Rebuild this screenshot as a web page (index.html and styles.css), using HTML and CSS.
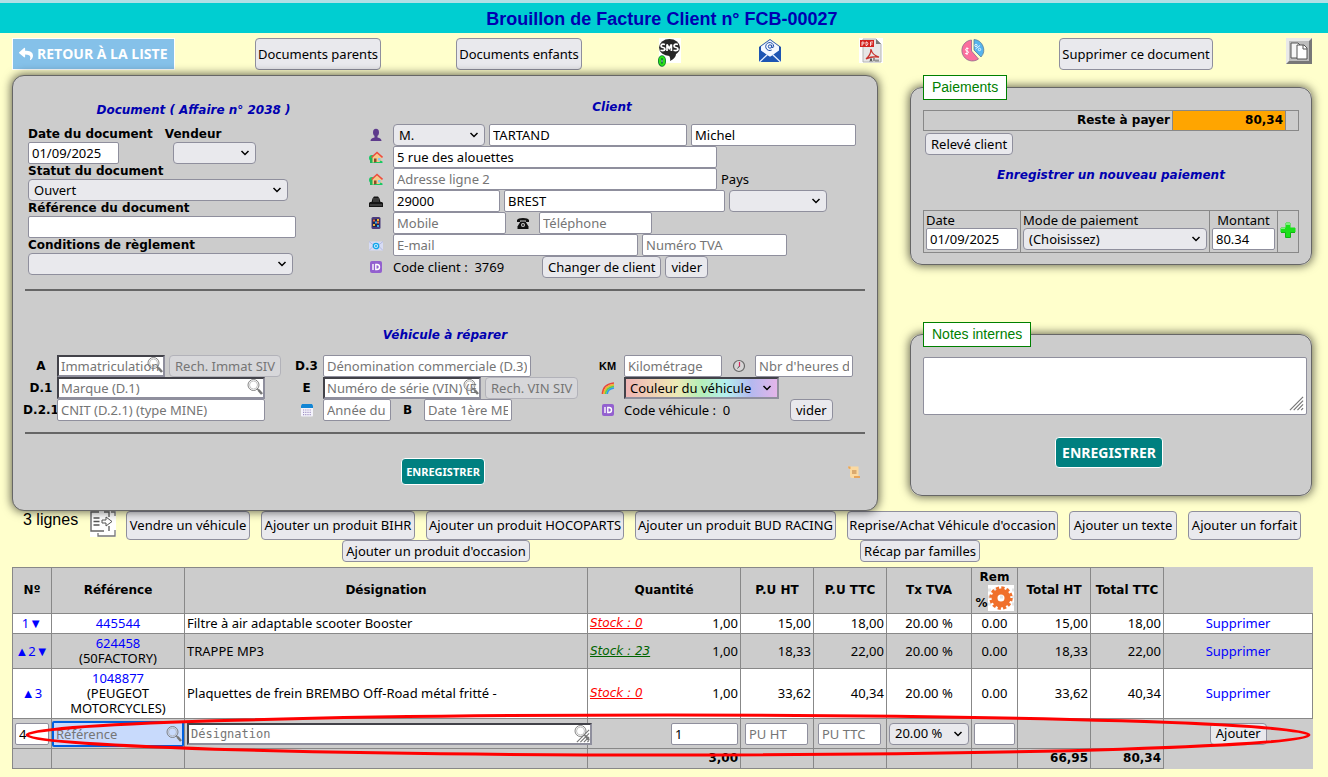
FILE: index.html
```html
<!DOCTYPE html>
<html lang="fr">
<head>
<meta charset="utf-8">
<title>Brouillon de Facture Client n° FCB-00027</title>
<link rel="stylesheet" href="styles.css">
</head>
<body>
<svg class="defs" aria-hidden="true">
  <symbol id="i-house" viewBox="0 0 14 14">
    <circle cx="3" cy="8" r="3" fill="#17c964"/><rect x="1" y="8" width="3" height="5" fill="#21b35a"/>
    <path d="M3.500 7 8 3l4.500 4v6h-9z" fill="#f6c98a"/>
    <path d="M2.500 7.500 8 2.500l5.500 5" fill="none" stroke="#ef4b3c" stroke-width="1.600"/>
    <rect x="5" y="8.500" width="2.500" height="4.500" fill="#8b4a2b"/><rect x="9" y="8" width="2.500" height="2.500" fill="#7fc8f5"/>
    <path d="M1 13h12.500v-1.500l-2-1-1 1.500H7.500z" fill="#17c964"/>
  </symbol>
  <symbol id="i-id" viewBox="0 0 14 14">
    <rect x="1" y="1" width="12" height="12" rx="2" fill="#9360cf"/>
    <path d="M4 4v6M6.800 4.500v5h1.200q2.500 0 2.500-2.500T8 4.500z" fill="none" stroke="#fff" stroke-width="1.400"/>
  </symbol>
  <symbol id="i-search" viewBox="0 0 18 18">
    <path d="M11 10.500 13 12.500" stroke="#777" stroke-width="1.500"/><path d="M12.500 12 16 16" stroke="#777" stroke-width="2.600"/>
    <circle cx="7.500" cy="7" r="5.500" fill="none" stroke="#777" stroke-width=".9"/>
    <circle cx="7.500" cy="7" r="4" fill="none" stroke="#aaa" stroke-width=".7"/>
  </symbol>
</svg>

<header class="title-bar"><h1>Brouillon de Facture Client n° FCB-00027</h1></header>

<div class="page">
  <nav class="toolbar">
    <a class="back" href="#liste">
      <svg class="ic14" viewBox="0 0 512 512"><path fill="#fff" d="M8.300 189.400 184.300 37.400c15.400-13.300 39.700-2.500 39.700 18.200v80C384.600 137.500 512 169.700 512 322.300c0 61.600-39.700 122.600-83.500 154.500-13.700 10-33.200-2.500-28.200-18.700C445.800 312.800 378.800 274.200 224 272v88c0 20.700-24.300 31.500-39.700 18.200l-176-152c-11.100-9.600-11.100-27.200 0-36.800z"/></svg>
      RETOUR À LA LISTE</a>
    <div><button class="btn tall">Documents parents</button></div>
    <div><button class="btn tall">Documents enfants</button></div>
    <div><a href="#sms" aria-label="SMS"><svg class="ic28" viewBox="0 0 28 29">
      <rect x="3" y="0" width="22" height="25" fill="#fff"/>
      <ellipse cx="13.500" cy="9.500" rx="10.500" ry="8.500" fill="#262626"/><path d="M12 16h8q0 4-6 7 1-3-2-7z" fill="#262626"/>
      <g fill="none" stroke="#fff" stroke-width="1.700"><path d="M9 6.500Q5 5.500 5 8q0 1.200 2 1.500t2 1.700Q8.500 13.200 4.500 12.200M11 13V6.500l2.200 4 2.200-4V13M22 6.500q-4-1-4 1.500 0 1.200 2 1.500t2 1.700q-.5 2-4.500 1"/></g>
      <ellipse cx="6" cy="23" rx="2.200" ry="4" fill="none" stroke="#063" stroke-width="3.600"/><ellipse cx="6" cy="23" rx="2.200" ry="4" fill="none" stroke="#2be01a" stroke-width="2.200"/>
    </svg></a></div>
    <div><a href="#mail" aria-label="E-mail"><svg class="ic28" viewBox="0 0 28 29">
      <path d="M3 9 14 1l11 8v15H3z" fill="#1f4fa8"/><path d="M5 8.500 14 2l9 6.500v5L14 19 5 13.500z" fill="#f4f8ff"/>
      <path d="M3 24V11l11 8 11-8v13z" fill="#1d55b3"/><path d="M3.500 24l8-7.500M24.500 24l-8-7.500" stroke="#e8f0ff" stroke-width="1.300"/>
      <g fill="none" stroke="#1f4fa8"><circle cx="14" cy="8.500" r="1.700"/><path d="M15.700 6.800v2.500q1.800 1 2-1a4 4 0 1 0-2 3.700"/></g>
    </svg></a></div>
    <div><a href="#pdf" aria-label="PDF"><svg class="ic28" viewBox="0 0 28 29">
      <rect x="2" y="0" width="24" height="25" fill="#fff"/><path d="M6 1h13l5 5v18H6z" fill="#e6e6e6" stroke="#b5b5b5"/><path d="M19 1v5h5z" fill="#777"/>
      <rect x="3" y="2" width="14" height="7" fill="#d3231f"/>
      <path d="M5 8V4h1.500q1.500 1 0 2H5M9 4v3.500h1q2-1.700 0-3.500zM13.500 8V4h2.500M13.500 6h2" fill="none" stroke="#fff" stroke-width=".8"/>
      <path d="M9 21q5-4 5-10 1 6 8 8-7-1-13 2z" fill="none" stroke="#c8322d" stroke-width="1.300"/>
      <path d="M13 23.500l1-3 1 3M17 20v3M19 23.500v-2M21 23.500v-2" stroke="#444" fill="none"/>
    </svg></a></div>
    <div><a href="#marge" aria-label="Marge"><svg class="ic28" viewBox="0 0 28 29">
      <path d="M13.500 13V2A10.500 10.500 0 1 0 20.500 21z" fill="#fb6f9d" stroke="#8d6a8d" stroke-width=".8"/>
      <path d="M16 12V1.500A10.500 10.500 0 0 1 23 19z" fill="#55b4ee" stroke="#5b7f9b" stroke-width=".8"/>
      <path d="M10.500 10.500Q7.500 10 7.500 11.500q0 1.200 1.500 1.500t1.500 1.500Q10.200 16 7.200 15.500M9 9.300v7.700" fill="none" stroke="#fff"/>
      <path d="M17.500 11l4.500-3.500" stroke="#e4f4ff"/><circle cx="18" cy="7.500" r="1.200" fill="none" stroke="#e4f4ff"/><circle cx="21.500" cy="11.500" r="1.200" fill="none" stroke="#e4f4ff"/>
    </svg></a></div>
    <div><button class="btn tall">Supprimer ce document</button></div>
    <div class="end"><a href="#copie" aria-label="Copier"><svg class="ic26" viewBox="0 0 26 26">
      <rect width="26" height="26" fill="#777"/><path d="M0 0h26l-3 3H3v20l-3 3z" fill="#e9e9e9"/><rect x="3" y="3" width="20" height="20" fill="#bdbdbd"/>
      <path d="M5 5h7l3 3v12H5z" fill="#f6f6f6" stroke="#555"/><path d="M11 7h7l3 3v11H11z" fill="#fff" stroke="#555"/><path d="M17 7v4h4" fill="none" stroke="#555"/>
    </svg></a></div>
  </nav>

  <main class="columns">
    <form class="card doc-card">
      <div class="doc-top">
        <section class="doc">
          <h2>Document ( Affaire n° 2038 )</h2>
          <div class="pair">
            <div class="stack"><label for="date">Date du document</label><input id="date" class="w91" value="01/09/2025"></div>
            <div class="stack"><label for="vendeur">Vendeur</label><select id="vendeur" class="w83 shift"><option></option></select></div>
          </div>
          <label for="statut">Statut du document</label>
          <select id="statut" class="w260"><option>Ouvert</option></select>
          <label for="refdoc">Référence du document</label>
          <input id="refdoc" class="w268">
          <label for="cond">Conditions de règlement</label>
          <select id="cond" class="w265"><option></option></select>
        </section>

        <section class="client">
          <h2>Client</h2>
          <div class="line"><svg class="ic14" viewBox="0 0 14 14"><ellipse cx="7" cy="4.500" rx="3" ry="3.700" fill="#5d3a8c"/><path d="M1.500 13q0-3 4-3.500V8h3v1.500q4 .5 4 3.500z" fill="#5d3a8c"/></svg>
            <select class="w92" aria-label="Civilité"><option>M.</option></select><input class="w198" aria-label="Nom" value="TARTAND"><input class="w165" aria-label="Prénom" value="Michel"></div>
          <div class="line"><svg class="ic14"><use href="#i-house"/></svg><input class="w324" aria-label="Adresse" value="5 rue des alouettes"></div>
          <div class="line"><svg class="ic14"><use href="#i-house"/></svg><input class="w324" aria-label="Adresse ligne 2" placeholder="Adresse ligne 2"><label class="plain" for="pays">Pays</label></div>
          <div class="line"><svg class="ic14" viewBox="0 0 14 14"><path d="M0 13V9l1-1h1.500l1-3.500L5 2.500h4l1.500 2 1 3.500H13l1 1v4z" fill="#151515"/><path d="M5 4v4M7 4v4M9 4v4M1 11h12" stroke="#777" stroke-width=".8"/></svg>
            <input class="w107" aria-label="Code postal" value="29000"><input class="w221" aria-label="Ville" value="BREST"><select id="pays" class="w98"><option></option></select></div>
          <div class="line"><svg class="ic14" viewBox="0 0 14 14"><rect x="2.500" y="1" width="9" height="12" rx="1.500" fill="#4a3b7c"/><rect x="3.500" y="3" width="7" height="8" fill="#20264f"/><path d="M4 3.500h2v2H4zM8 5.500h2v2H8z" fill="#e8623a"/><path d="M6 5.500h2v2H6zM8 9h2v2H8z" fill="#3fa9e8"/><path d="M4 8h2v2H4zM8 3h2v2H8z" fill="#f2b532"/></svg>
            <input class="w113" aria-label="Mobile" placeholder="Mobile"><span class="mid"><svg class="ic14" viewBox="0 0 14 14"><path d="M1 6V4q1-2 6-2t6 2v2h-3V4.500H4V6z" fill="#111"/><path d="M4.500 5.500h5l3 5V13h-11v-2.500z" fill="#111"/><circle cx="7" cy="9" r="2" fill="#ccc"/><circle cx="7" cy="9" r=".9" fill="#111"/></svg></span><input class="w113" aria-label="Téléphone" placeholder="Téléphone"></div>
          <div class="line"><svg class="ic14" viewBox="0 0 14 14"><rect y="3.500" width="14" height="9" fill="#d7dcf5"/><path d="M0 3.500 7 9l7-5.500M0 12.500l5-5M14 12.500l-5-5" fill="none" stroke="#a9b0d9" stroke-width=".8"/><circle cx="7" cy="8" r="2.700" fill="#c9ecff" stroke="#12a4ea" stroke-width="1.300"/><circle cx="7" cy="8" r="1" fill="#12a4ea"/></svg>
            <input class="w245" aria-label="E-mail" placeholder="E-mail"><input class="w145" aria-label="Numéro TVA" placeholder="Numéro TVA"></div>
          <div class="line"><svg class="ic14"><use href="#i-id"/></svg><span class="w145">Code client :&nbsp; 3769</span><button type="button" class="btn">Changer de client</button><button type="button" class="btn">vider</button></div>
        </section>
      </div>

      <hr>
      <h2 class="veh-title">Véhicule à réparer</h2>
      <div class="veh">
        <label for="immat">A</label>
        <div class="fields"><span class="search w108"><input id="immat" class="inset" placeholder="Immatriculation (A)"><svg class="ic18"><use href="#i-search"/></svg></span><button type="button" class="btn" disabled>Rech. Immat SIV</button></div>
        <label for="deno">D.3</label>
        <div class="fields"><input id="deno" class="w208" placeholder="Dénomination commerciale (D.3)"></div>
        <label for="km" class="km">KM</label>
        <div class="fields"><input id="km" class="w98" placeholder="Kilométrage"><span class="mid"><svg class="ic14" viewBox="0 0 14 14"><circle cx="7" cy="7" r="5.500" fill="#d6d6d6" stroke="#666" stroke-width="1.200"/><path d="M7.500 3v4.500" stroke="#e0245e" stroke-width="1.200"/><path d="M7.500 7 5.500 9.500" stroke="#555"/></svg></span><input class="w98" aria-label="Nombre d'heures" placeholder="Nbr d'heures de"></div>

        <label for="marque">D.1</label>
        <div class="fields"><span class="search w208"><input id="marque" class="inset" placeholder="Marque (D.1)"><svg class="ic18"><use href="#i-search"/></svg></span></div>
        <label for="vin">E</label>
        <div class="fields"><span class="search w158"><input id="vin" class="inset" placeholder="Numéro de série (VIN) (E)"><svg class="ic18"><use href="#i-search"/></svg></span><button type="button" class="btn" disabled>Rech. VIN SIV</button></div>
        <label for="couleur"><svg class="ic14" viewBox="0 0 14 14"><g fill="none" stroke-width="1.700"><path d="M1.500 13Q2 3 13 2" stroke="#e8453c"/><path d="M3 13Q3.500 5 13 3.700" stroke="#f7b32b"/><path d="M4.600 13Q5 6.500 13 5.300" stroke="#5fcf4a"/><path d="M6.200 13Q6.500 8 13 7" stroke="#2f9bee"/></g></svg></label>
        <div class="fields"><select id="couleur" class="w155 rainbow"><option>Couleur du véhicule</option></select></div>

        <label for="cnit">D.2.1</label>
        <div class="fields"><input id="cnit" class="w208" placeholder="CNIT (D.2.1) (type MINE)"></div>
        <label for="annee"><svg class="ic14" viewBox="0 0 14 14"><rect x="1" y="1.500" width="12" height="12" rx="1" fill="#f4f3fb"/><path d="M1 5V2.500l1-1.500h10l1 1.500V5z" fill="#1285d4"/><path d="M3 7h8M3 9.300h8M3 11.600h8" stroke="#a193c4" stroke-dasharray="1.200 1" stroke-width="1.200"/></svg></label>
        <div class="fields"><input id="annee" class="w68" placeholder="Année du modèle"><label class="mid" for="mec">B</label><input id="mec" class="w88" placeholder="Date 1ère MEC"></div>
        <span class="lab"><svg class="ic14"><use href="#i-id"/></svg></span>
        <div class="fields"><span class="w162">Code véhicule :&nbsp; 0</span><button type="button" class="btn">vider</button></div>
      </div>
      <hr>
      <div class="save-row">
        <button type="button" class="save small">ENREGISTRER</button>
        <svg class="ic14" viewBox="0 0 14 14"><path d="M1 1.500h10.500V11H13v2H5q-2 0-2-2V4Q1 4 1 1.500z" fill="#fbd9a0"/><path d="M1 1.500h2.500V4H3Q1 4 1 1.500zM7 11h6v2H7z" fill="#e8a55a"/><path d="M5 6h4.500M5 8h4.500" stroke="#b97a3c"/></svg>
      </div>
    </form>

    <aside class="side">
      <fieldset class="card pay">
        <legend>Paiements</legend>
        <table class="due"><tr><th scope="row">Reste à payer</th><td class="amount">80,34</td><td class="slim"></td></tr></table>
        <button type="button" class="btn releve">Relevé client</button>
        <h2>Enregistrer un nouveau paiement</h2>
        <table class="newpay"><tr>
          <td class="c1"><label class="plain" for="pdate">Date</label><input id="pdate" value="01/09/2025"></td>
          <td><label class="plain" for="pmode">Mode de paiement</label><select id="pmode"><option>(Choisissez)</option></select></td>
          <td class="c3"><label class="plain" for="pmt">Montant</label><input id="pmt" value="80.34"></td>
          <td class="c4"><button type="button" class="ghost" aria-label="Ajouter le paiement"><svg class="ic18" viewBox="0 0 18 18"><path d="M7 2h4v5h5v4h-5v5H7v-5H2V7h5z" fill="#1be01b" stroke="#1be01b"/><path d="M7 2h4v2H7zM2 7h4v1H2z" fill="#7df07d"/><path d="M2 11.500h4.500v5h5v-5H16" fill="none" stroke="#10b510"/></svg></button></td>
        </tr></table>
      </fieldset>
      <fieldset class="card notes">
        <legend>Notes internes</legend>
        <textarea aria-label="Notes internes"></textarea>
        <svg class="grip" viewBox="0 0 16 16"><path d="M1 15 15 1M5 15 15 5M9 15l6-6M13 15l2-2" stroke="#777" stroke-width="1.300"/></svg>
        <div class="center"><button type="button" class="save">ENREGISTRER</button></div>
      </fieldset>
    </aside>
  </main>

  <div class="actions">
    <span class="count">3 lignes</span>
    <svg class="ic26" viewBox="0 0 26 26"><rect width="26" height="26" fill="#fff"/><path d="M9 1H1v19h13M14 1h5v5M19 15v5" fill="none" stroke="#666" stroke-width="1.400"/><path d="M21 1h4v4M25 19v6H8v-3" fill="none" stroke="#777" stroke-width="1.300"/><path d="M3.500 7h6M3.500 10.500h6M3.500 14h6" stroke="#555" stroke-width="1.300"/><path d="M12 9h4V6l6 4.500-6 4.500v-3h-4z" fill="#fff" stroke="#555"/></svg>
    <button class="btn">Vendre un véhicule</button>
    <button class="btn">Ajouter un produit BIHR</button>
    <button class="btn">Ajouter un produit HOCOPARTS</button>
    <button class="btn">Ajouter un produit BUD RACING</button>
    <button class="btn">Reprise/Achat Véhicule d'occasion</button>
    <button class="btn">Ajouter un texte</button>
    <button class="btn">Ajouter un forfait</button>
  </div>
  <div class="actions2">
    <button class="btn">Ajouter un produit d'occasion</button>
    <button class="btn">Récap par familles</button>
  </div>

  <div class="lines-wrap">
    <table class="lines">
      <colgroup><col class="k39"><col class="k133"><col class="k403"><col class="k153"><col class="k73"><col class="k73"><col class="k85"><col class="k46"><col class="k73"><col class="k73"><col class="k149"></colgroup>
      <thead><tr><th>Nº</th><th>Référence</th><th>Désignation</th><th>Quantité</th><th>P.U HT</th><th>P.U TTC</th><th>Tx TVA</th>
        <th class="rem">Rem<div class="gear">%<svg class="ic26" viewBox="0 0 26 26"><rect width="26" height="26" fill="#fff"/><path d="M0 5h26M0 12h26M0 19h26" stroke="#e6e6e6" stroke-width="3" stroke-dasharray="3 3"/><circle cx="13" cy="13" r="6.500" fill="none" stroke="#f0702b" stroke-width="6"/><circle cx="13" cy="13" r="10" fill="none" stroke="#f0702b" stroke-width="3.500" stroke-dasharray="3.100 2.136"/></svg></div></th>
        <th>Total HT</th><th>Total TTC</th><th class="bare"></th></tr></thead>
      <tbody>
        <tr class="white"><td class="c"><a href="#d1">1▼</a></td><td class="c"><a href="#r1">445544</a></td><td>Filtre à air adaptable scooter Booster</td>
          <td><div class="qty"><a class="out" href="#s1">Stock : 0</a><span>1,00</span></div></td><td class="r">15,00</td><td class="r">18,00</td><td class="c">20.00 %</td><td class="c">0.00</td><td class="r">15,00</td><td class="r">18,00</td><td class="c"><a href="#x1">Supprimer</a></td></tr>
        <tr><td class="c"><a href="#d2">▲2▼</a></td><td class="c"><a class="ref" href="#r2">624458</a><div>(50FACTORY)</div></td><td>TRAPPE MP3</td>
          <td><div class="qty"><a class="in" href="#s2">Stock : 23</a><span>1,00</span></div></td><td class="r">18,33</td><td class="r">22,00</td><td class="c">20.00 %</td><td class="c">0.00</td><td class="r">18,33</td><td class="r">22,00</td><td class="c"><a href="#x2">Supprimer</a></td></tr>
        <tr class="white"><td class="c"><a href="#d3">▲3</a></td><td class="c"><a class="ref" href="#r3">1048877</a><div>(PEUGEOT MOTORCYCLES)</div></td><td>Plaquettes de frein BREMBO Off-Road métal fritté -</td>
          <td><div class="qty"><a class="out" href="#s3">Stock : 0</a><span>1,00</span></div></td><td class="r">33,62</td><td class="r">40,34</td><td class="c">20.00 %</td><td class="c">0.00</td><td class="r">33,62</td><td class="r">40,34</td><td class="c"><a href="#x3">Supprimer</a></td></tr>
        <tr class="entry"><td><input aria-label="Numéro" value="4"></td>
          <td class="flush"><span class="search"><input class="inset current" aria-label="Référence" placeholder="Référence"><svg class="ic18"><use href="#i-search"/></svg></span></td>
          <td><span class="search wide"><input class="inset mono" aria-label="Désignation" placeholder="Désignation"><svg class="ic18"><use href="#i-search"/></svg><svg class="corner" viewBox="0 0 16 16"><path d="M1 15 15 1M5 15 15 5M9 15l6-6M13 15l2-2" stroke="#777" stroke-width="1.300"/></svg></span></td>
          <td class="r"><input class="w67" aria-label="Quantité" value="1"></td><td class="c"><input class="w63" aria-label="PU HT" placeholder="PU HT"></td><td class="c"><input class="w63" aria-label="PU TTC" placeholder="PU TTC"></td>
          <td><select aria-label="Taux TVA"><option>20.00 %</option></select></td><td><input aria-label="Remise"></td><td></td><td></td><td class="c bare"><button class="btn add">Ajouter</button></td></tr>
      </tbody>
      <tfoot><tr><td></td><td></td><td></td><td class="r">3,00</td><td></td><td></td><td></td><td></td><td class="r">66,95</td><td class="r">80,34</td><td class="bare"></td></tr></tfoot>
    </table>
    <svg class="mark" viewBox="0 0 1300 48" preserveAspectRatio="none"><ellipse cx="656" cy="24" rx="641" ry="20" fill="none" stroke="#f00" stroke-width="3"/></svg>
  </div>
</div>
</body>
</html>
```
FILE: styles.css
```css
* { box-sizing: border-box; }

body {
  margin: 0;
  background: #ffffcc;
  color: #000;
  font: 13px/15px "Noto Sans", sans-serif;
}

.defs { display: none; }
svg { display: block; flex: none; }
.ic14 { width: 14px; height: 14px; }
.ic18 { width: 18px; height: 18px; }
.ic26 { width: 26px; height: 26px; }
.ic28 { width: 28px; height: 29px; }

.title-bar {
  border-top: 3px solid #b0e0e6;
  background: #00ced1;
  padding: 6px 0 4px;
  text-align: center;
}
h1 {
  margin: 0;
  padding-right: 4px;
  font: bold 18px/20px "Liberation Sans", sans-serif;
  color: #0000b0;
}
h2 {
  margin: 0;
  font: italic bold 12px/16px "DejaVu Sans", sans-serif;
  color: #0000b0;
  text-align: center;
}

.page { padding: 0 16px 8px 12px; }

/* form controls */
input, select, textarea, button { font: inherit; color: #000; margin: 0; }
input, select {
  height: 22px;
  min-width: 0;
  border: 1px solid #8f8f9d;
  border-radius: 2px;
  padding: 0 3px;
  background-color: #fff;
}
input::placeholder { color: #757575; opacity: 1; }
select {
  appearance: none;
  border-radius: 4px;
  padding: 0 20px 0 5px;
  background: #e9e9ed url("data:image/svg+xml,%3Csvg xmlns='http://www.w3.org/2000/svg' width='10' height='8'%3E%3Cpath d='M1.500 2 5 5.500 8.500 2' fill='none' stroke='%23000' stroke-width='1.500'/%3E%3C/svg%3E") no-repeat right 5px center;
}
input.inset { border: 2px inset #8f8f9d; border-radius: 0; padding: 0 2px; }
.btn {
  min-height: 22px;
  border: 1px solid #8f8f9d;
  border-radius: 4px;
  padding: 0 5px;
  background: #e9e9ed;
  white-space: nowrap;
}
.btn.tall { height: 32px; padding: 0 2px; }
.btn:disabled { background: #d7d7da; border-color: #b2b2b9; color: #757575; }
.save {
  height: 31px;
  border: 1px solid #fff;
  border-radius: 4px;
  padding: 0 6px;
  background: #008080;
  color: #fff;
  font-size: 14px;
  font-weight: bold;
}
.save.small { height: 27px; padding: 0 4px; font-size: 11px; }
.ghost { border: 0; padding: 0; background: none; }

.w63 { width: 63px; } .w67 { width: 67px; } .w68 { width: 68px; } .w83 { width: 83px; }
.w88 { width: 88px; } .w91 { width: 91px; } .w92 { width: 92px; } .w98 { width: 98px; }
.w107 { width: 107px; } .w108 { width: 108px; } .w113 { width: 113px; } .w145 { width: 145px; }
.w155 { width: 155px; } .w158 { width: 158px; } .w162 { width: 162px; } .w165 { width: 165px; }
.w198 { width: 198px; } .w208 { width: 208px; } .w221 { width: 221px; } .w245 { width: 245px; }
.w260 { width: 260px; } .w265 { width: 265px; } .w268 { width: 268px; } .w324 { width: 324px; }

/* toolbar */
.toolbar {
  display: grid;
  grid-template-columns: 206fr 200fr 202fr 99fr 102fr 100fr 102fr 226fr 63fr;
  align-items: start;
  justify-items: center;
  padding: 5px 0;
}
.toolbar > .end { justify-self: end; }
.back {
  justify-self: start;
  display: flex;
  align-items: center;
  gap: 4px;
  height: 32px;
  border: 1px solid #fff;
  padding: 0 6px;
  background: #85c1e9;
  color: #fff;
  font: bold 14px/16px "Noto Sans", sans-serif;
  font-family: "Open Sans", "Noto Sans", sans-serif;
  text-decoration: none;
}

/* cards */
.columns {
  position: relative;
  display: grid;
  grid-template-columns: minmax(0, 866fr) minmax(0, 402fr);
  gap: 32px;
}
.card {
  border: 1px solid #666;
  border-radius: 12px;
  background: #ccc;
  box-shadow: 0 0 10px 1px rgba(0, 0, 0, .6);
  margin: 0;
  min-width: 0;
}
.doc-card { padding: 23px 12px 25px; }
.doc-top { display: grid; grid-template-columns: 334fr 506fr; }
.doc { display: flex; flex-direction: column; align-items: flex-start; padding: 3px 0 0 3px; }
.doc h2 { align-self: stretch; margin-bottom: 9px; }
label { font: bold 12px/15px "DejaVu Sans", sans-serif; }
label.plain { font: inherit; }
.pair { display: flex; gap: 12px; }
.stack { display: flex; flex-direction: column; }
.shift { margin-left: 8px; }
.client h2 { margin-bottom: 9px; }
.line, .fields { display: flex; align-items: center; gap: 4px; height: 22px; white-space: nowrap; }
.line { padding-left: 10px; }
.line > svg:first-child { margin-right: 6px; }
.mid { width: 25px; display: flex; justify-content: center; }
hr { margin: 11px 0; border: 0; border-top: 2px solid #666; }
.doc-card > hr { height: 2px; }
.veh-title { margin: 36px 0 12px; }
.veh {
  display: grid;
  grid-template-columns: 32px 233fr 33px 268fr 33px 241fr;
  align-items: center;
}
.veh > label, .lab { display: flex; justify-content: center; }
.km { font: bold 11px/15px "Liberation Sans", sans-serif; }
.search { position: relative; display: flex; }
.search input { width: 100%; }
.search svg { position: absolute; right: 1px; top: 1px; pointer-events: none; }
.rainbow {
  border: 2px inset #8f8f9d;
  border-radius: 0;
  padding-left: 4px;
  background-image: url("data:image/svg+xml,%3Csvg xmlns='http://www.w3.org/2000/svg' width='10' height='8'%3E%3Cpath d='M1.500 2 5 5.500 8.500 2' fill='none' stroke='%23000' stroke-width='1.500'/%3E%3C/svg%3E"), linear-gradient(90deg, #efb5b5, #efe9b5 33%, #b5efb9 50%, #b5efef 66%, #b5b9ef 83%, #e4b5ea);
  background-position: right 5px center, 0 0;
}
.save-row { display: grid; grid-template-columns: 1fr auto; align-items: center; padding: 13px 4px 0 14px; }
.save-row .save { justify-self: center; }

/* side panels */
.side { display: flex; flex-direction: column; gap: 57px; }
legend {
  border: 1px solid #008000;
  background: #fff;
  color: #008000;
  padding: 3px 8px;
  font: 14px/17px "Liberation Sans", sans-serif;
}
.pay { padding: 10px 12px 11px; }
table { border-collapse: collapse; width: 100%; }
.side td, .side th { border: 1px solid #888; }
.side th, .side .amount { font: bold 12px/15px "DejaVu Sans", sans-serif; text-align: right; padding: 2px; }
.side .amount { width: 113px; background: #ffa500; }
.slim { width: 13px; }
.releve { margin: 2px; }
.pay h2 { margin: 10px 0 27px; }
.newpay { table-layout: fixed; }
.newpay td { padding: 2px; }
.newpay label { display: block; }
.newpay input, .newpay select { width: 100%; display: block; }
.c1 { width: 97px; }
.c3 { width: 68px; text-align: center; }
.newpay .c4 { width: 21px; padding: 1px; }
.notes { position: relative; padding: 10px 4px 27px 12px; }
.notes textarea {
  display: block;
  width: 100%;
  height: 58px;
  border: 1px solid #8f8f9d;
  border-radius: 2px;
  resize: none;
}
.grip { position: absolute; width: 15px; height: 15px; right: 7px; top: 49px; }
.center { display: flex; justify-content: center; padding: 22px 12px 0 0; }

/* action buttons */
.actions {
  display: grid;
  grid-template-columns: 56px 25px 124fr 154fr 198fr 201fr 211fr 108fr 113fr;
  gap: 11px;
  padding: 0 11px;
}
.actions .btn { height: 29px; padding: 0; }
.count { font: 16px/18px "Liberation Sans", sans-serif; }
.actions2 {
  display: grid;
  grid-template-columns: 1fr 1fr;
  justify-items: center;
  padding: 0 150px 5px 182px;
}
.actions2 .btn { padding: 0 3px; }

/* lines table */
.lines-wrap { position: relative; }
.lines { table-layout: fixed; background: #ccc; }
.k39 { width: 39px; } .k133 { width: 133px; } .k403 { width: 403px; } .k153 { width: 153px; }
.k73 { width: 73px; } .k85 { width: 85px; } .k46 { width: 46px; } .k149 { width: 149px; }
.lines td, .lines th { border: 1px solid #888; padding: 2px; }
.lines thead tr { height: 46px; }
.lines th, .lines tfoot td { font: bold 12px/15px "DejaVu Sans", sans-serif; white-space: nowrap; }
.lines .bare { border-style: none; }
.lines .rem { padding: 1px 2px; }
.gear { display: flex; align-items: flex-end; justify-content: center; }
.white { background: #fff; }
.lines a { color: #0000ff; text-decoration: none; }
.lines .ref { display: block; }
.lines .c { text-align: center; }
.lines .r { text-align: right; }
.qty { display: flex; justify-content: space-between; }
.lines .qty a { font: italic 12px/15px "DejaVu Sans", sans-serif; text-decoration: underline; }
.lines .qty .out { color: #f00; }
.lines .qty .in { color: #006400; }
.entry { height: 30px; }
.entry td > input, .entry td > select { display: block; width: 100%; }
.entry .r > input { width: 67px; margin-left: auto; }
.entry .c > input { width: 63px; margin: 0 2px; }
.lines .flush { padding: 0; }
input.current {
  height: 26px;
  border: 2px solid #0060df;
  border-radius: 2px;
  background: #c8dafc;
  outline: 0;
}
.flush .ic18 { top: 4px; }
.wide { width: 405px; }
.mono { font-family: "DejaVu Sans Mono", monospace; font-size: 12px; }
.search .corner { width: 14px; height: 14px; right: 2px; top: 6px; }
.add { display: inline-block; }
.mark { position: absolute; left: 0; right: 0; bottom: 10px; width: 100%; height: 48px; pointer-events: none; }
```
